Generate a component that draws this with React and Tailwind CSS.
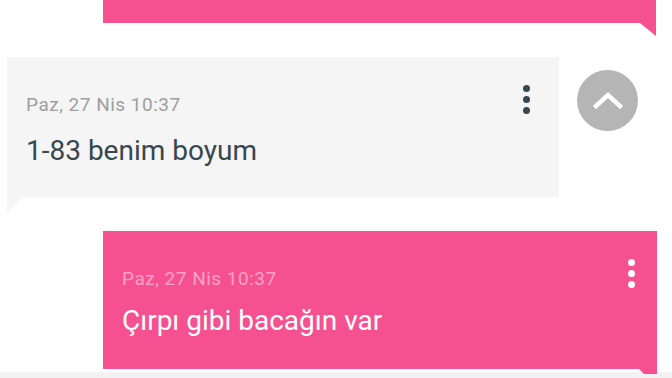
import React from "react";

function Dots({ color }) {
  return (
    <div className="flex flex-col gap-[4px]">
      <span className={`block w-[7px] h-[7px] rounded-full ${color}`} />
      <span className={`block w-[7px] h-[7px] rounded-full ${color}`} />
      <span className={`block w-[7px] h-[7px] rounded-full ${color}`} />
    </div>
  );
}

export default function App() {
  return (
    <div
      className="w-[672px] h-[378px] overflow-hidden bg-white flex flex-col"
      style={{ fontFamily: "Roboto, 'Noto Sans', sans-serif" }}
    >
      {/* top outgoing bubble (cut off) */}
      <div className="relative ml-[103px] w-[553px] h-[23px] bg-[#f55191] shrink-0">
        <svg className="absolute right-0 top-[23px]" width="16" height="13" viewBox="0 0 16 13">
          <polygon points="0,0 16,0 16,13" fill="#f55191" />
        </svg>
      </div>

      {/* incoming bubble row */}
      <div className="flex items-start mt-[34px] shrink-0">
        <div className="relative ml-[7px] w-[552px] h-[140px] bg-[#f5f5f5] pl-[19px] pt-[36px]">
          <div className="text-[19px] leading-[24px] tracking-[0.5px] text-[#9e9e9e]">Paz, 27 Nis 10:37</div>
          <div className="mt-[17px] text-[28px] leading-[34px] text-[#37474f]">1-83 benim boyum</div>
          <div className="absolute right-[29px] top-[28px]">
            <Dots color="bg-[#37474f]" />
          </div>
          <svg className="absolute left-0 top-[140px]" width="16" height="16" viewBox="0 0 16 16">
            <polygon points="0,0 16,0 0,16" fill="#f5f5f5" />
          </svg>
        </div>
        <div className="ml-[18px] mt-[13px] w-[61px] h-[61px] rounded-full bg-[#b5b5b5] flex items-center justify-center">
          <svg width="30" height="20" viewBox="0 0 30 20">
            <polyline points="3,15 15,4 27,15" fill="none" stroke="#ffffff" strokeWidth="4.5" strokeLinecap="square" />
          </svg>
        </div>
      </div>

      {/* outgoing bubble */}
      <div className="relative ml-[103px] mt-[34px] w-[554px] h-[138px] bg-[#f55191] pl-[19px] pt-[36px] shrink-0">
        <div className="text-[19px] leading-[24px] tracking-[0.5px] text-[#fba3c6]">Paz, 27 Nis 10:37</div>
        <div className="mt-[13px] text-[28px] leading-[34px] text-white">Çırpı gibi bacağın var</div>
        <div className="absolute right-[22px] top-[28px]">
          <Dots color="bg-white" />
        </div>
        <svg className="absolute right-0 top-[138px]" width="18" height="5" viewBox="0 0 18 5">
          <polygon points="0,0 18,0 18,5 5,5" fill="#f55191" />
        </svg>
      </div>

      <div className="mt-[3px] h-[8px] bg-[#f2f2f2] shrink-0" />
    </div>
  );
}
